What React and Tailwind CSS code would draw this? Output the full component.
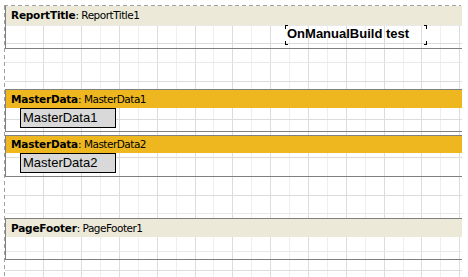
const gridPos = Array.from({ length: 24 }, (_, i) => i + 1).map((k) => ({
  k,
  p: Math.round(5.6 + 18.9 * k),
}));

function Grid() {
  return (
    <svg className="absolute inset-0" width="468" height="277" aria-hidden="true">
      {gridPos.map(({ k, p }) => (
        <line
          key={"v" + k}
          x1={p + 0.5}
          y1={5}
          x2={p + 0.5}
          y2={277}
          stroke={k % 2 === 0 ? "#dcdcdc" : "#efefef"}
        />
      ))}
      {gridPos.slice(0, 14).map(({ k, p }) => (
        <line
          key={"h" + k}
          x1={5}
          y1={p + 0.5}
          x2={462}
          y2={p + 0.5}
          stroke={k % 2 === 0 ? "#dcdcdc" : "#e9e9e9"}
        />
      ))}
    </svg>
  );
}

function BandHeader({ kind, name, color, height }) {
  return (
    <div
      className={`flex pl-[5px] font-['DejaVu_Sans',sans-serif] text-[10.5px] text-black ${color} ${height}`}
    >
      <span className="font-bold tracking-[-0.2px]">{kind}</span>
      <span className="tracking-[-0.5px]">: {name}</span>
    </div>
  );
}

function DataBox({ children }) {
  return (
    <div className="ml-[14px] h-[20px] w-[96px] border border-black bg-[#d9d9d9] pl-[2px] font-['Liberation_Sans',Arial,sans-serif] text-[13px] leading-[18px] text-black">
      {children}
    </div>
  );
}

function Corner({ className }) {
  return <span className={`absolute h-[4px] w-[3px] border-black ${className}`} />;
}

export default function App() {
  return (
    <div className="relative h-[277px] w-[468px] overflow-hidden bg-white">
      <Grid />
      <div className="relative flex flex-col pl-[4px] pt-[5px]">
        <div className="h-px w-[457px] bg-[repeating-linear-gradient(to_right,#a0a0a0_0_4px,transparent_4px_7px)]" />
        <div className="flex">
          <div className="h-[272px] w-px bg-[repeating-linear-gradient(to_bottom,#a0a0a0_0_4px,transparent_4px_7px)]" />
          <div className="flex w-[457px] flex-col">
            {/* ReportTitle */}
            <div className="border-b border-l border-[#808080]">
              <BandHeader kind="ReportTitle" name="ReportTitle1" color="bg-[#ece9d8]" height="h-[19px] leading-[19px]" />
              <div className="h-[23px]">
                <div className="relative ml-[279px] h-[20px] w-[142px] pl-[2px] font-['Liberation_Sans',Arial,sans-serif] text-[13px] font-bold leading-[18px] text-black">
                  OnManualBuild test
                  <Corner className="left-0 top-0 border-l border-t" />
                  <Corner className="bottom-0 left-0 border-b border-l" />
                  <Corner className="right-0 top-0 border-r border-t" />
                  <Corner className="bottom-0 right-0 border-b border-r" />
                </div>
              </div>
            </div>

            <div className="h-[40px]" />

            {/* MasterData1 */}
            <div className="border-y border-l border-[#808080]">
              <BandHeader kind="MasterData" name="MasterData1" color="bg-[#eeb71f]" height="h-[18px] leading-[18px]" />
              <div className="h-[23px]">
                <DataBox>MasterData1</DataBox>
              </div>
            </div>

            <div className="h-[3px]" />

            {/* MasterData2 */}
            <div className="border-y border-l border-[#808080]">
              <BandHeader kind="MasterData" name="MasterData2" color="bg-[#eeb71f]" height="h-[17px] leading-[17px]" />
              <div className="h-[23px]">
                <DataBox>MasterData2</DataBox>
              </div>
            </div>

            <div className="h-[41px]" />

            {/* PageFooter */}
            <div className="border-y border-l border-[#808080]">
              <BandHeader kind="PageFooter" name="PageFooter1" color="bg-[#ece9d8]" height="h-[18px] leading-[18px]" />
              <div className="h-[22px]" />
            </div>
          </div>
        </div>
      </div>
    </div>
  );
}
